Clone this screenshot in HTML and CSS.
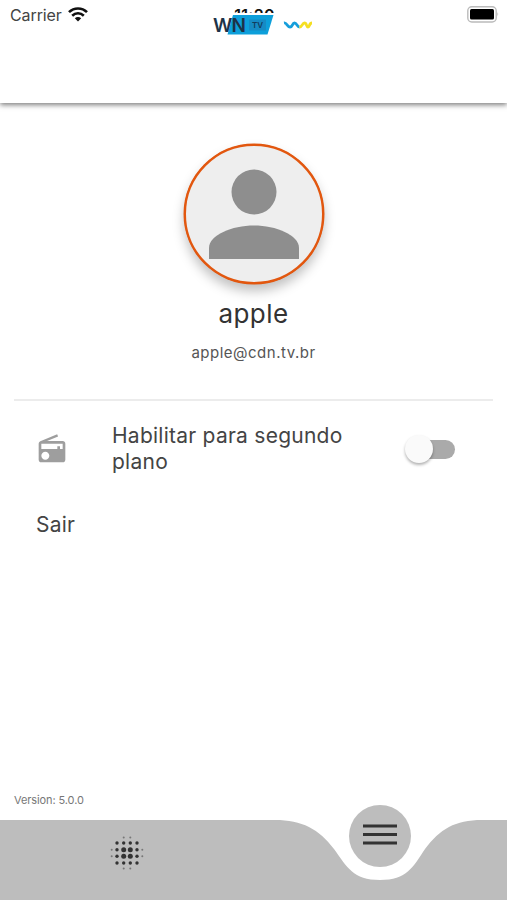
FILE: index.html
```html
<!DOCTYPE html>
<html lang="pt-BR">
<head>
<meta charset="UTF-8">
<meta name="viewport" content="width=device-width, initial-scale=1.0">
<title>WN TV</title>
<link rel="stylesheet" href="styles.css">
</head>
<body>
<header class="topbar">
    <div class="status">
        <div class="carrier">
            <span>Carrier</span>
            <svg class="wifi" viewBox="0 0 20 15">
                <path d="M1 5.200C6 .2 14 .2 19 5.200M4.200 8.700C7.500 5.500 12.500 5.500 15.800 8.700" fill="none" stroke="#111" stroke-width="2.600"/>
                <path d="M6.800 11.300C8.600 9.700 11.400 9.700 13.200 11.300L10 14.500z" fill="#111"/>
            </svg>
        </div>
        <div class="time">11:20</div>
        <svg class="battery" viewBox="0 0 32 17">
            <rect x=".8" y=".8" width="28.400" height="15.200" rx="4" fill="#fff" stroke="#bbb" stroke-width="1.400"/>
            <rect x="3" y="3" width="24" height="10.600" rx="1.500" fill="#000"/>
            <path d="M30.500 6q1.500 2.200 0 4.500z" fill="#aaa"/>
        </svg>
    </div>
    <div class="logo">
        <svg viewBox="0 0 110 36">
            <path d="M22 2H62.500L56.500 21.500H16.500z" fill="#0d9fda"/>
            <text x="2" y="18.500" class="logo-wn" textLength="33">WN</text>
            <rect x="38" y="6.500" width="17" height="11" fill="#168bc4"/>
            <text x="41" y="15" class="logo-tv">TV</text>
            <path d="M73 10C76 9.500 76 14 79 14S81 10 83.500 10S86 14 88.500 14" fill="none" stroke="#159edb" stroke-width="2.800"/>
            <path d="M88.500 14C91.500 14 91 10 93.500 10S95 14 97 14S98 10 101 10" fill="none" stroke="#f5df22" stroke-width="2.800"/>
        </svg>
    </div>
</header>

<main>
    <section class="profile">
        <div class="avatar">
            <svg viewBox="0 0 136 136">
                <circle cx="68" cy="46" r="22.500"/>
                <path d="M23 113V102C23 89 46 79.500 68 79.500S113 89 113 102V113z"/>
            </svg>
        </div>
        <h1>apple</h1>
        <p>apple@cdn.tv.br</p>
    </section>

    <div class="option">
        <svg class="radio" viewBox="0 0 24 24">
            <path d="M3.240 6.150C2.510 6.430 2 7.170 2 8v12c0 1.100.89 2 2 2h16c1.110 0 2-.9 2-2V8c0-1.110-.89-2-2-2H8.300l8.260-3.340L15.880 1 3.240 6.150zM7 20c-1.660 0-3-1.340-3-3s1.340-3 3-3 3 1.340 3 3-1.340 3-3 3zm13-8h-2v-2h-2v2H4V8h16v4z"/>
        </svg>
        <label class="option-text" for="background">Habilitar para segundo plano</label>
        <input type="checkbox" class="switch" id="background">
    </div>
    <a class="logout">Sair</a>
    <div class="version">Version: 5.0.0</div>
</main>

<nav class="tabbar">
    <svg class="tab-shape" viewBox="0 0 507 80">
        <path d="M0 0H275C302 0 319 9 334 29C347 47 353 60 380 60S413 47 425 29C440 9 455 0 482 0H507V80H0z"/>
    </svg>
    <svg class="dots" viewBox="0 0 36 36">
        <g class="tiny">
            <circle cx="14.700" cy="2.500" r="1"/><circle cx="21.300" cy="2.500" r="1"/>
            <circle cx="2.700" cy="14.700" r="1"/><circle cx="33.300" cy="14.700" r="1"/>
            <circle cx="2.700" cy="21.300" r="1"/><circle cx="33.300" cy="21.300" r="1"/>
            <circle cx="14.700" cy="33.500" r="1"/><circle cx="21.300" cy="33.500" r="1"/>
        </g>
        <circle cx="8" cy="8" r="1.700"/><circle cx="14.700" cy="8" r="1.700"/><circle cx="21.300" cy="8" r="1.700"/><circle cx="28" cy="8" r="1.700"/>
        <circle cx="8" cy="14.700" r="1.700"/><circle cx="14.700" cy="14.700" r="2.500"/><circle cx="21.300" cy="14.700" r="2.500"/><circle cx="28" cy="14.700" r="1.700"/>
        <circle cx="8" cy="21.300" r="1.700"/><circle cx="14.700" cy="21.300" r="2.500"/><circle cx="21.300" cy="21.300" r="2.500"/><circle cx="28" cy="21.300" r="1.700"/>
        <circle cx="8" cy="28" r="1.700"/><circle cx="14.700" cy="28" r="1.700"/><circle cx="21.300" cy="28" r="1.700"/><circle cx="28" cy="28" r="1.700"/>
    </svg>
    <div class="menu">
        <svg viewBox="0 0 34 22">
            <path d="M0 2H34M0 10.500H34M0 19H34" stroke="#333" stroke-width="3"/>
        </svg>
    </div>
</nav>
</body>
</html>
```

FILE: styles.css
```css
* {
    box-sizing: border-box;
}
body {
    margin: 0;
    height: 900px;
    display: flex;
    flex-direction: column;
    overflow: hidden;
    font-family: Inter, "Liberation Sans", sans-serif;
    background-color: #fff;
    color: #333;
}
svg {
    display: block;
}
.topbar {
    position: relative;
    height: 103px;
    flex-shrink: 0;
    background-color: #fff;
    box-shadow: 0 2px 5px rgba(0, 0, 0, 0.5);
}
.status {
    display: grid;
    grid-template-columns: 1fr auto 1fr;
    padding: 5px 8px 0 10px;
    height: 30px;
}
.carrier {
    display: flex;
    gap: 6px;
    font-size: 16px;
    letter-spacing: -0.1px;
    line-height: 20px;
    color: #444;
}
.wifi {
    width: 20px;
    height: 15px;
    margin-top: 2px;
}
.time {
    font-size: 16px;
    font-weight: 600;
    letter-spacing: 0.3px;
    line-height: 20px;
    color: #111;
}
.battery {
    width: 32px;
    height: 17px;
    justify-self: end;
    margin-top: 1px;
}
/* the logo covers the lower half of the clock */
.logo {
    position: absolute;
    left: 211px;
    top: 13px;
    width: 110px;
    height: 36px;
    background-color: #fff;
}
.logo-wn {
    font-size: 19px;
    font-weight: 600;
    fill: #1d3348;
}
.logo-tv {
    font-size: 8px;
    font-weight: 600;
    fill: #123b5c;
}
main {
    flex: 1;
    display: flex;
    flex-direction: column;
}
.profile {
    display: flex;
    flex-direction: column;
    align-items: center;
    margin: 0 14px;
    padding-top: 41px;
    height: 298px;
    border-bottom: 2px solid #ececec;
}
.avatar {
    width: 140px;
    height: 140px;
    border: 2px solid #e2570f;
    border-radius: 50%;
    background-color: #eee;
    box-shadow: 0 0 0 0.5px #e2570f, 0 7px 12px rgba(0, 0, 0, 0.25);
    fill: #8e8e8e;
}
h1 {
    margin: 14px 0 0;
    font-size: 26px;
    letter-spacing: 0.4px;
    line-height: 32px;
    font-weight: 400;
}
.profile p {
    margin: 13px 0 0;
    font-size: 15px;
    letter-spacing: 0.5px;
    line-height: 20px;
    color: #555;
}
.option {
    display: flex;
    align-items: center;
    height: 96px;
    padding: 0 52px 0 36px;
}
.radio {
    width: 32px;
    height: 32px;
    fill: #9e9e9e;
}
.option-text {
    width: 260px;
    margin-left: 44px;
    font-size: 21px;
    letter-spacing: 0.25px;
    line-height: 26px;
    color: #444;
}
.switch {
    appearance: none;
    position: relative;
    width: 46px;
    height: 19px;
    margin: 0 0 0 auto;
    border-radius: 10px;
    background-color: #aaa;
}
.switch::before {
    content: "";
    position: absolute;
    left: -4px;
    top: -5px;
    width: 28px;
    height: 28px;
    border-radius: 50%;
    background-color: #fafafa;
    box-shadow: 0 2px 3px rgba(0, 0, 0, 0.3);
}
.logout {
    margin: 15px 0 0 36px;
    font-size: 21px;
    letter-spacing: 0.25px;
    line-height: 26px;
    color: #444;
}
.version {
    margin: auto 0 13px 14px;
    font-size: 11px;
    letter-spacing: -0.1px;
    line-height: 14px;
    color: #777;
}
.tabbar {
    position: relative;
    height: 80px;
    flex-shrink: 0;
}
.tab-shape {
    width: 507px;
    height: 80px;
    fill: #bdbdbd;
}
.dots {
    position: absolute;
    left: 109px;
    top: 15px;
    width: 36px;
    height: 36px;
    fill: #333;
}
.tiny {
    fill: #777;
}
.menu {
    position: absolute;
    left: 349px;
    top: -15px;
    width: 62px;
    height: 62px;
    border-radius: 50%;
    background-color: #bdbdbd;
    display: flex;
    align-items: center;
    justify-content: center;
}
.menu svg {
    width: 34px;
    height: 22px;
    margin-bottom: 2px;
}
```
